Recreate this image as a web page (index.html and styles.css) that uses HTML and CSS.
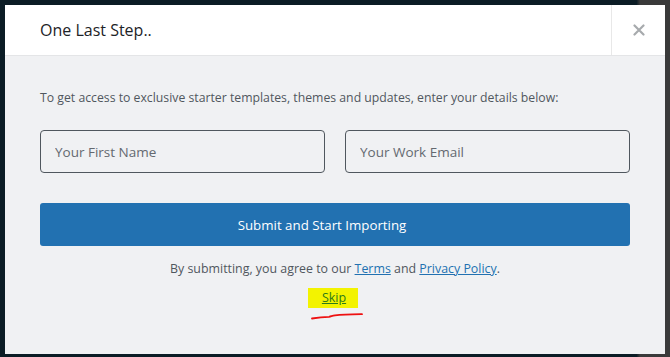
FILE: index.html
```html
<!DOCTYPE html>
<html lang="en">
  <head>
    <meta charset="UTF-8" />
    <title>One Last Step</title>
    <link rel="stylesheet" href="styles.css">
  </head>
  <body>
    <div class="overlay">
      <div class="modal">
        <header class="modal-head">
          <h2 class="modal-title">One Last Step..</h2>
          <button class="modal-close" aria-label="Close">
            <svg width="12" height="12" viewBox="0 0 12 12">
              <path d="M1.5 1.5 L10.5 10.5 M10.5 1.5 L1.5 10.5" stroke="#a7aaad" stroke-width="2.2" stroke-linecap="round" />
            </svg>
          </button>
        </header>
        <div class="modal-body">
          <p class="intro">To get access to exclusive starter templates, themes and updates, enter your details below:</p>
          <div class="fields">
            <input type="text" placeholder="Your First Name" />
            <input type="email" placeholder="Your Work Email" />
          </div>
          <button class="submit">Submit and Start Importing</button>
          <p class="agree">By submitting, you agree to our <a href="#">Terms</a> and <a href="#">Privacy Policy</a>.</p>
          <div class="skip-row">
            <a href="#" class="skip">Skip</a>
            <svg class="scribble" width="52" height="8" viewBox="0 0 52 8">
              <path d="M1 6.5 C8 5.5 14 5 18 4.8 C20 4.6 21 3.8 24 3.4 C32 2.6 42 2.4 51 2.2" stroke="#ee1111" stroke-width="1.8" fill="none" stroke-linecap="round" />
            </svg>
          </div>
        </div>
      </div>
    </div>
  </body>
</html>
```

FILE: styles.css
```css
* {
  box-sizing: border-box;
}

body {
  margin: 0;
  font-family: "Open Sans", "Noto Sans", sans-serif;
  background-color: #333;
}

.overlay {
  width: 670px;
  height: 357px;
  padding: 5px 5px 3px 5px;
  background: linear-gradient(90deg, #0b1c25 0, #0b1c25 95%, #3a3a3a 95.5%);
}

.modal {
  height: 349px;
  background-color: #f0f1f3;
  display: flex;
  flex-direction: column;
}

.modal-head {
  height: 51px;
  background-color: #fff;
  border-bottom: 1px solid #e4e5e7;
  display: flex;
  align-items: stretch;
}

.modal-title {
  flex: 1;
  margin: 0;
  padding-left: 35px;
  font-size: 16px;
  font-weight: 400;
  color: #1d2327;
  line-height: 50px;
}

.modal-close {
  width: 54px;
  border: none;
  border-left: 1px solid #e8e8e8;
  background: #fff;
  display: flex;
  align-items: center;
  justify-content: center;
  padding: 0;
}

.modal-body {
  padding: 33px 35px 0 35px;
  text-align: center;
}

.intro {
  margin: 0;
  text-align: left;
  font-size: 12.25px;
  color: #50575e;
}

.fields {
  display: flex;
  gap: 20px;
  margin-top: 24px;
}

.fields input {
  flex: 1;
  height: 43px;
  border: 1px solid #50575e;
  border-radius: 4px;
  background: transparent;
  padding: 0 14px;
  font-family: inherit;
  font-size: 13.5px;
  color: #2c3338;
}

.fields input::placeholder {
  color: #646970;
}

.submit {
  display: block;
  width: 100%;
  height: 43px;
  margin-top: 30px;
  padding: 0 26px 0 0;
  border: none;
  border-radius: 3px;
  background-color: #2271b1;
  color: #fff;
  font-family: inherit;
  font-size: 13.3px;
}

.agree {
  margin: 14px 0 0 0;
  font-size: 12.4px;
  color: #50575e;
}

.agree a {
  color: #2271b1;
}

.skip-row {
  margin-top: 11px;
  display: flex;
  flex-direction: column;
  align-items: center;
}

.skip {
  display: inline-block;
  background-color: #f3f300;
  color: #2c7a1a;
  font-size: 12.5px;
  padding: 1px 12px 2px 14px;
  margin-left: -4px;
}

.scribble {
  margin-top: 4px;
  margin-left: 4px;
}
```
